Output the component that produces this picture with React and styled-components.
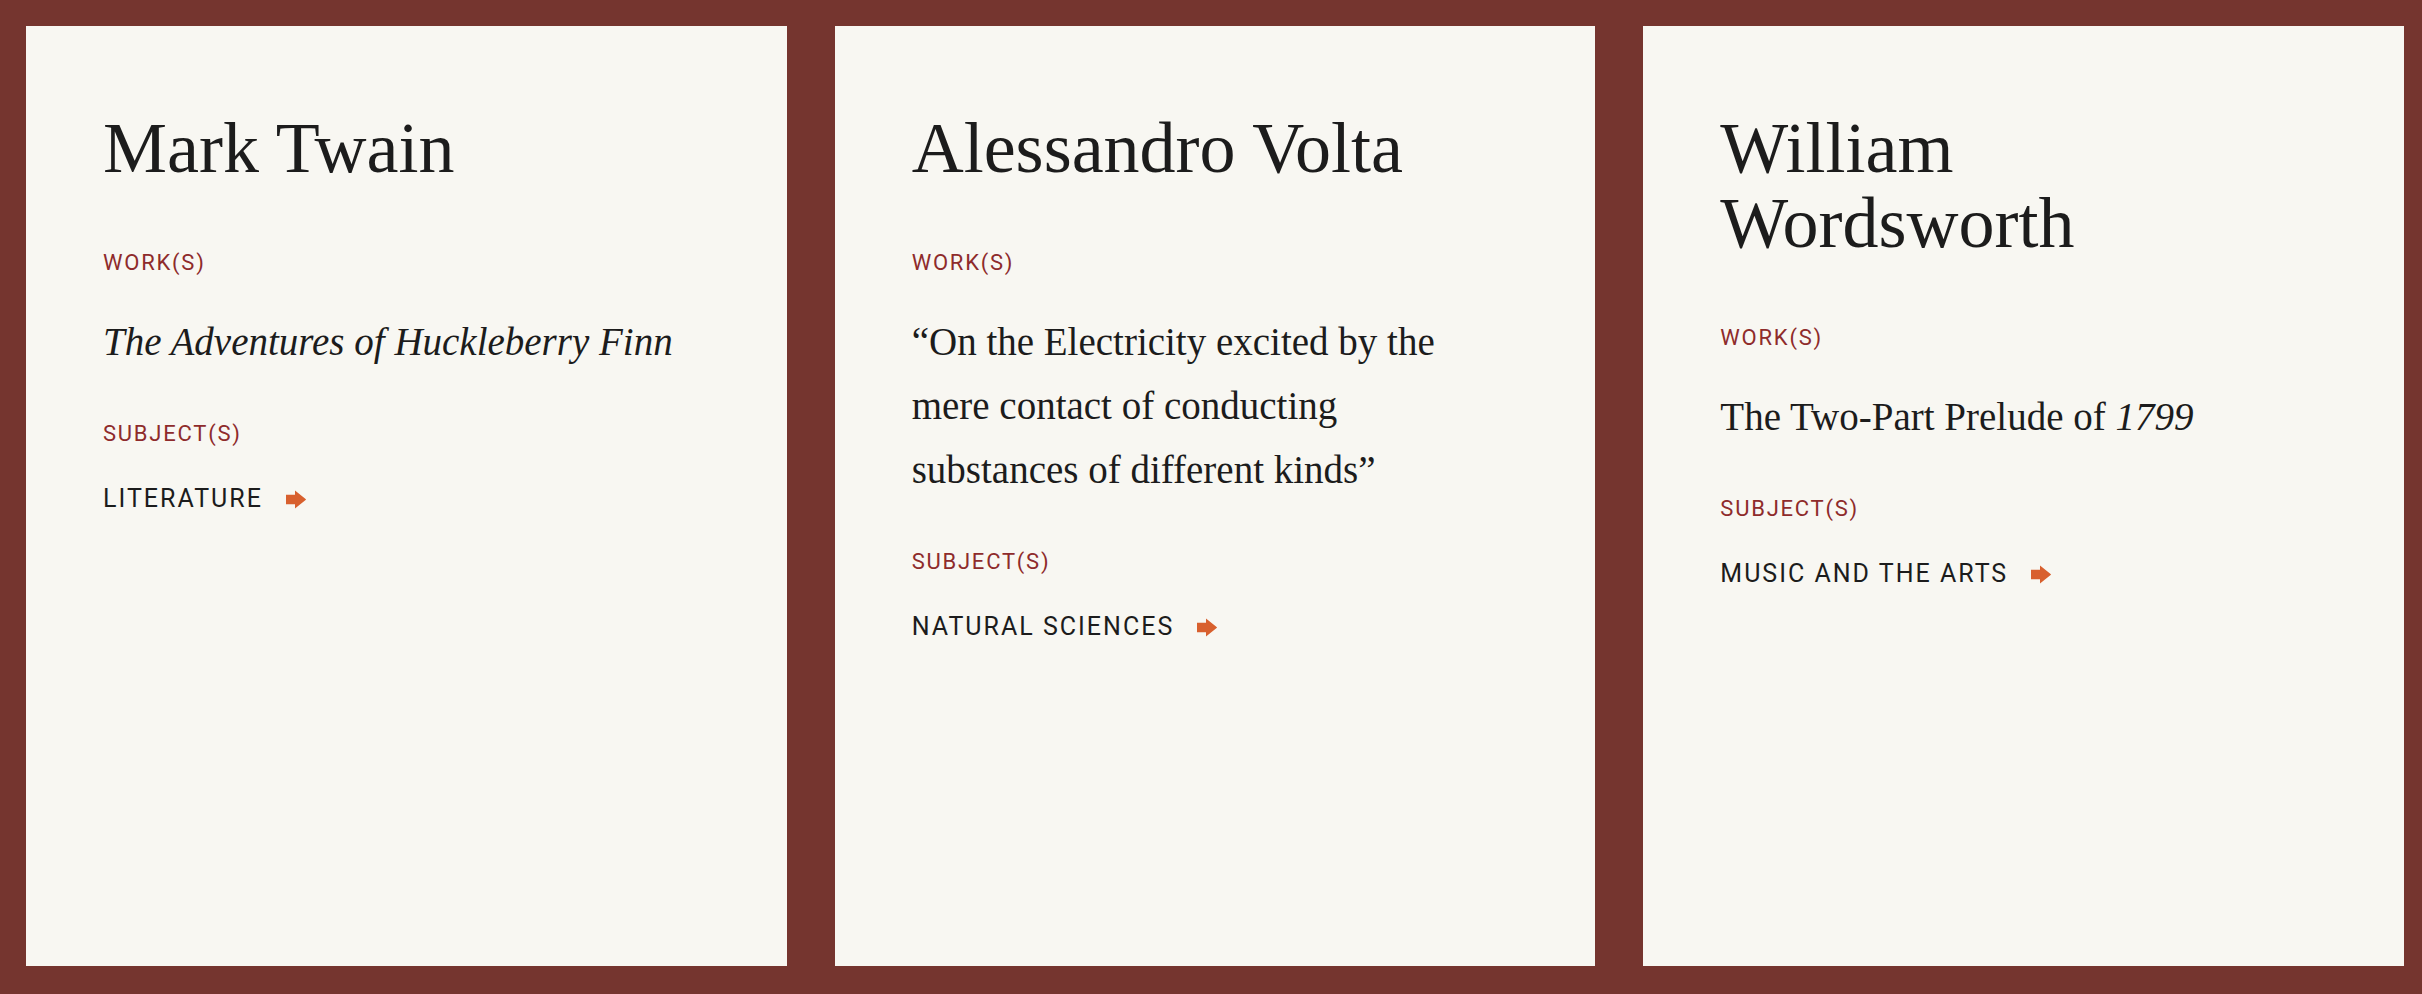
import React from 'react';
import styled, { createGlobalStyle } from 'styled-components';

const GlobalStyle = createGlobalStyle`
  html, body {
    margin: 0;
    padding: 0;
    background: #75352f;
  }
  * {
    box-sizing: border-box;
  }
`;

const Page = styled.main`
  display: grid;
  grid-template-columns: repeat(3, 1fr);
  gap: 48px;
  min-height: 100vh;
  padding: 26px 18px 28px 26px;
  background: #75352f;
`;

const Card = styled.article`
  display: flex;
  flex-direction: column;
  align-items: flex-start;
  background: #f8f7f2;
  padding: 85px 77px;
  color: #1c1c1c;
`;

const Name = styled.h2`
  margin: 0 0 64px;
  max-width: 540px;
  font-family: 'Liberation Serif', 'Times New Roman', serif;
  font-weight: 400;
  font-size: 72px;
  line-height: 75px;
`;

const Field = styled.section`
  & + & {
    margin-top: 47px;
  }
`;

const Label = styled.h3`
  margin: 0;
  font-family: Roboto, 'Liberation Sans', sans-serif;
  font-weight: 400;
  font-size: 22px;
  line-height: 26px;
  letter-spacing: 0.08em;
  text-transform: uppercase;
  color: #8e2b2b;
`;

const Work = styled.p`
  margin: 34px 0 0;
  max-width: 578px;
  font-family: 'Liberation Serif', 'Times New Roman', serif;
  font-size: 39px;
  line-height: 64px;
  font-style: ${({ $italic }) => ($italic ? 'italic' : 'normal')};
`;

const SubjectLink = styled.a`
  display: inline-flex;
  align-items: center;
  gap: 23px;
  margin-top: 37px;
  font-family: Roboto, 'Liberation Sans', sans-serif;
  font-size: 25px;
  line-height: 30px;
  letter-spacing: 0.08em;
  text-transform: uppercase;
  color: #1c1c1c;
  text-decoration: none;
`;

const Arrow = () => (
  <svg width="20" height="19" viewBox="0 0 20 19" aria-hidden="true">
    <path d="M0 4.8h9V0.4l10.6 8.6a0.6 0.6 0 0 1 0 1L9 18.6v-4.4H0z" fill="#d8602e" />
  </svg>
);

const people = [
  {
    name: 'Mark Twain',
    work: 'The Adventures of Huckleberry Finn',
    italic: true,
    subject: 'Literature',
  },
  {
    name: 'Alessandro Volta',
    work: '“On the Electricity excited by the mere contact of conducting substances of different kinds”',
    subject: 'Natural Sciences',
  },
  {
    name: 'William Wordsworth',
    work: (
      <>
        The Two-Part Prelude of <i>1799</i>
      </>
    ),
    subject: 'Music and the Arts',
  },
];

export default function App() {
  return (
    <>
      <GlobalStyle />
      <Page>
        {people.map((p) => (
          <Card key={p.name}>
            <Name>{p.name}</Name>
            <Field>
              <Label>Work(s)</Label>
              <Work $italic={p.italic}>{p.work}</Work>
            </Field>
            <Field>
              <Label>Subject(s)</Label>
              <SubjectLink href="#">
                {p.subject}
                <Arrow />
              </SubjectLink>
            </Field>
          </Card>
        ))}
      </Page>
    </>
  );
}
